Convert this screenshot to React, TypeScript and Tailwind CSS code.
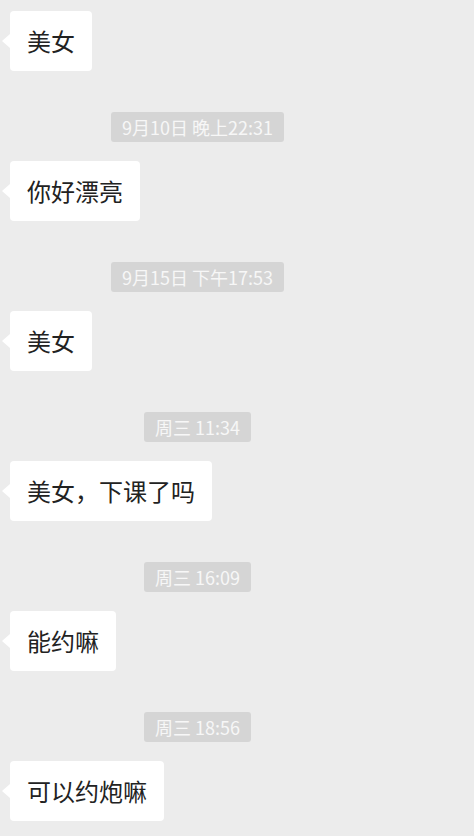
import React from "react";

const font = { fontFamily: '"PingFang SC","Noto Sans CJK SC","Noto Sans",sans-serif' };

function Bubble({ text, first }: { text: string; first?: boolean }) {
  return (
    <div className={`relative self-start ml-[10px] ${first ? "" : "mt-[19px]"}`}>
      <div className="absolute left-[-8px] top-1/2 -translate-y-1/2 w-0 h-0 border-y-[7px] border-y-transparent border-r-[8px] border-r-white" />
      <div className="h-[60px] flex items-center px-[17px] bg-white rounded-[4px] text-[24px] leading-none text-[#222222] whitespace-nowrap">
        {text}
      </div>
    </div>
  );
}

function Stamp({ text }: { text: string }) {
  return (
    <div className="mt-[41px] h-[30px] flex items-center px-[11px] bg-[#d5d5d5] rounded-[3px] text-[18px] leading-none text-[#f7f7f7] whitespace-nowrap">
      {text}
    </div>
  );
}

export default function App() {
  return (
    <div className="w-[474px] h-[836px] bg-[#ececec] overflow-hidden" style={font}>
      <div className="w-[395px] flex flex-col items-center pt-[11px]">
        <Bubble text="美女" first />
        <Stamp text="9月10日 晚上22:31" />
        <Bubble text="你好漂亮" />
        <Stamp text="9月15日 下午17:53" />
        <Bubble text="美女" />
        <Stamp text="周三 11:34" />
        <Bubble text="美女，下课了吗" />
        <Stamp text="周三 16:09" />
        <Bubble text="能约嘛" />
        <Stamp text="周三 18:56" />
        <Bubble text="可以约炮嘛" />
      </div>
    </div>
  );
}
